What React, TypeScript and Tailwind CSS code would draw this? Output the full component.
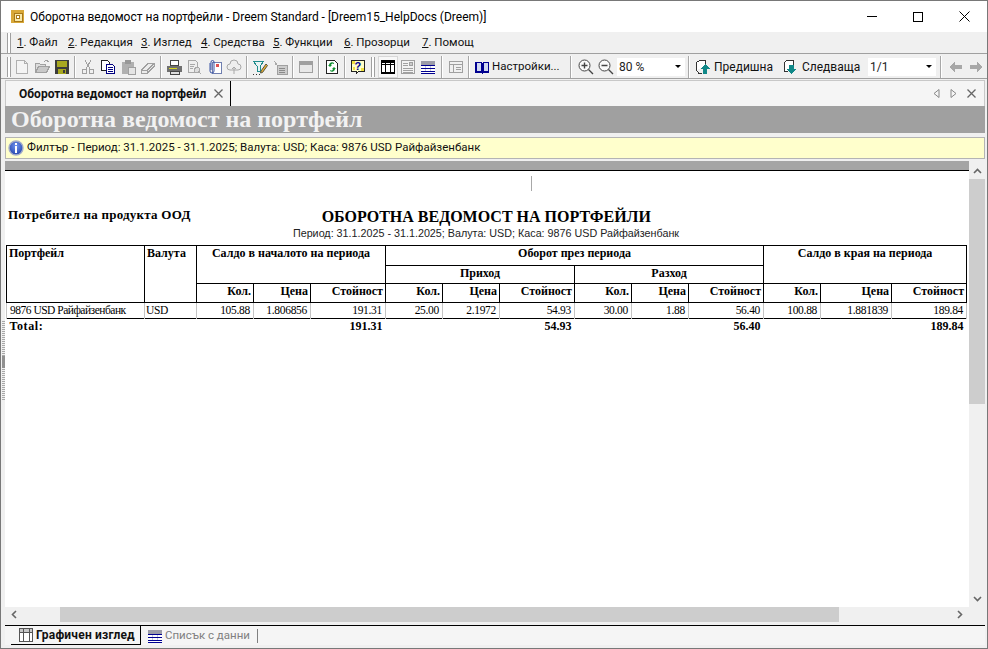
import React from 'react';

const ui = '[font-family:"Roboto","Noto_Sans",sans-serif]';
const serif = '[font-family:"Liberation_Serif",serif]';

function Ic({ children, w = 16 }: { children: React.ReactNode; w?: number }) {
    return (
        <svg width={w} height={16} viewBox={`0 0 ${w} 16`} fill="none" shapeRendering="crispEdges">
            {children}
        </svg>
    );
}

const icons: { [key: string]: React.ReactNode } = {
    doc: <path d="M2.500 1.500h8l3 3v10h-11zM10.500 1.500v3h3" stroke="#b0b0b0" fill="#f4f4f4" />,
    open: <g><path d="M1.500 13.500v-9h4l1 1h5v2" stroke="#a0a0a0" fill="#dcdcdc" /><path d="M1.500 13.500l3-6h11l-3 6z" stroke="#a0a0a0" fill="#c8c8c8" /><path d="M10 3l2-2 3 2" stroke="#a0a0a0" /></g>,
    save: <g><rect x="1" y="1" width="14" height="14" fill="#3c3c3c" /><rect x="3" y="2" width="10" height="6" fill="#a8a820" /><rect x="4" y="10" width="8" height="5" fill="#a8a820" /><rect x="9" y="11" width="2" height="3" fill="#3c3c3c" /></g>,
    cut: <g stroke="#a0a0a0"><path d="M5 1l5 9M11 1l-5 9" /><circle cx="4.500" cy="12.500" r="2.200" /><circle cx="11.500" cy="12.500" r="2.200" /></g>,
    copy: <g><path d="M1.500 1.500h6l2 2v8h-8z" stroke="#222" fill="#fff" /><path d="M6.500 5.500h6l2 2v7h-8z" stroke="#000080" fill="#fff" /><path d="M8 8.500h5M8 10.500h5M8 12.500h5" stroke="#000080" /></g>,
    paste: <g><path d="M2 3h12v12H2z" fill="#b0b0b0" /><path d="M5 1h6v4H5z" fill="#989898" /><path d="M8 8h7v7H8z" fill="#e4e4e4" stroke="#a0a0a0" /></g>,
    eraser: <path d="M1.500 11l7-7h6v3l-7 7h-6zM1.500 11h6v3M7.500 11l7-7" stroke="#a0a0a0" fill="#ececec" />,
    print: <g><path d="M4.500 1.500h8v5h-8z" stroke="#444" fill="#fff" /><path d="M1 7h15v6H1z" fill="#707070" /><path d="M3 9h8v1H3z" fill="#d8d820" /><path d="M4 12h9v3H4z" fill="#ddd" stroke="#444" /></g>,
    preview: <g stroke="#a8a8a8"><path d="M2.500 1.500h7l2 2v10h-9z" fill="#eee" /><path d="M4 5h5M4 7h4M4 9h3" /><circle cx="11" cy="11" r="2.500" fill="#ddd" /><path d="M13 13l2 2" /></g>,
    attach: <g><rect x="6" y="3" width="9" height="11" fill="#fff" stroke="#6f7fb0" /><rect x="10" y="5" width="3" height="3" fill="#e05050" /><path d="M4 4v8a2 2 0 0 0 4 0V3a1.500 1.500 0 0 0-3 0v8" stroke="#3b55a5" fill="none" shapeRendering="auto" /></g>,
    cloud: <g stroke="#a8a8a8" shapeRendering="auto"><path d="M4 11a3 3 0 0 1 0-6 4 4 0 0 1 8 0 3 3 0 0 1 0 6z" fill="#eee" /><path d="M8 8v7M6 10l2-2 2 2" /></g>,
    filter: <g><path d="M1.500 2.500h10L8 7v5H5V7z" fill="#e8f4f4" stroke="#208c8c" /><path d="M9 12l5-7 1.500 1.500-5 7-2 .5z" fill="#e8b030" stroke="#554" shapeRendering="auto" /><path d="M1 15h1M4 15h1M7 15h1" stroke="#333" /></g>,
    calc: <g><path d="M2 1l3 4-1 2z" fill="#aaa" /><rect x="5" y="6" width="10" height="9" fill="#ccc" stroke="#a0a0a0" /><path d="M7 9h6M7 11h6M7 13h6" stroke="#8a8a8a" /></g>,
    win: <g><rect x="1.500" y="2.500" width="13" height="11" stroke="#a0a0a0" fill="#e8e8e8" /><rect x="2" y="3" width="12" height="3" fill="#a0a0a0" /></g>,
    refresh: <g><path d="M2.500 1.500h8l3 3v10h-11z" stroke="#222" fill="#fff" /><path d="M10 4a3 3 0 0 0-5 2l-1 0 2 2 2-2H7a2 2 0 0 1 3-1zM6 12a3 3 0 0 0 5-2l1 0-2-2-2 2h1a2 2 0 0 1-3 1z" fill="#109030" shapeRendering="auto" /></g>,
    help: <g><path d="M1.500 1.500h13v11h-6l-2 2v-2h-5z" stroke="#222" fill="#ffffc8" /><path d="M2 2h3v3H2zM3 8h2v3H3zM11 9h3v3h-3z" fill="#f0e040" /><text x="4.600" y="11" fontSize="11" fontWeight="700" fill="#000090" fontFamily="Liberation Sans">?</text></g>,
    grid: <g><rect x="1.500" y="1.500" width="13" height="13" stroke="#000" fill="#fff" /><path d="M1 2h14v2H1zM1 13h14v2H1z" fill="#000" /><path d="M1.500 5.500h13M5.500 4v9M10.500 4v9" stroke="#000" /></g>,
    gridTab: <g><rect x="1.500" y="1.500" width="13" height="13" stroke="#555" fill="#fff" /><path d="M2 2h12v3H2z" fill="#c8c8c8" /><path d="M1.500 5.500h13M5.500 2v12M11.500 2v12" stroke="#555" /></g>,
    form: <g stroke="#a0a0a0"><rect x="1.500" y="1.500" width="13" height="13" fill="#f2f2f2" /><path d="M3 4h5M3 6h5M3 9h10M3 11h10M3 13h10" /><rect x="9.500" y="3.500" width="3" height="3" fill="#ccc" /></g>,
    list: <g><rect x="1" y="2" width="14" height="12" fill="#fff" /><path d="M1 2h14v4H1z" fill="#9c9ca8" /><path d="M1 6.500h14M1 9.500h14M1 12.500h14M1 14.500h14" stroke="#000090" /><path d="M5.500 7v2M10.500 7v2M5.500 10v2M10.500 10v2" stroke="#c8c8e0" /></g>,
    panel: <g stroke="#a0a0a0"><rect x="1.500" y="2.500" width="13" height="11" fill="#f0f0f0" /><path d="M1.500 5.500h13M5.500 5.500v8M8 8h5M8 10h5" /></g>,
    book: <g><path d="M1 3h6l1 1 1-1h6v11H9l-1 1-1-1H1z" fill="#000090" /><path d="M2.500 4h4v8h-4zM9.500 4h4v8h-4z" fill="#d0d8f0" /></g>,
    zoomIn: <g stroke="#444" shapeRendering="auto"><circle cx="6.500" cy="6.500" r="5.500" fill="#fafafa" /><path d="M3.500 6.500h6M6.500 3.500v6M10.500 10.500l4.500 4.500" strokeWidth="1.400" /></g>,
    zoomOut: <g stroke="#444" shapeRendering="auto"><circle cx="6.500" cy="6.500" r="5.500" fill="#fafafa" /><path d="M3.500 6.500h6M10.500 10.500l4.500 4.500" strokeWidth="1.400" /></g>,
    prev: <g><path d="M1.500 11V3.500l3-2h6v6" stroke="#333" fill="#fff" /><path d="M1.500 11l2 3h3" stroke="#333" /><path d="M10 5l5 5h-3v5H8v-5H5z" fill="#108888" /></g>,
    next: <g><path d="M4.500 12.500h-3v-9l2-2h7v5" stroke="#333" fill="#fff" /><path d="M6 6h5v4h3l-5.500 5L3 10h3z" fill="#108888" /></g>,
    left: <path d="M1 8l6-5v3h7v4H7v3z" fill="#a8a8a8" />,
    right: <path d="M15 8L9 3v3H2v4h7v3z" fill="#a8a8a8" />,
};

function Tool({ name, active }: { name: string; active?: boolean }) {
    return (
        <span className={`w-5 h-[22px] shrink-0 flex items-center justify-center ${active ? 'bg-[#f8f8f8] outline outline-[#d8d8d8] -outline-offset-1' : ''}`}>
            <Ic>{icons[name]}</Ic>
        </span>
    );
}

function Sep({ w = 6 }: { w?: number }) {
    return (
        <span className="shrink-0 flex justify-center" style={{ width: w }}>
            <span className="w-px h-[22px] bg-[#a8a8a8] border-r border-white box-content"></span>
        </span>
    );
}

function Grip({ h = 20 }: { h?: number }) {
    return <span className="shrink-0 w-1 border-x border-[#a0a0a0] bg-white" style={{ height: h }}></span>;
}

function Combo({ value }: { value: string }) {
    return (
        <span className="shrink-0 w-[68px] h-[18px] bg-white flex items-center justify-between pl-[2px] pr-[2px] text-[12px] text-[#222]">
            {value}
            <span className="w-0 h-0 border-x-[3px] border-x-transparent border-t-[3px] border-t-black mr-[2px]"></span>
        </span>
    );
}

const menus = [
    { n: '1', t: '. Файл', x: 'w-[51px]' },
    { n: '2', t: '. Редакция', x: 'w-[73px]' },
    { n: '3', t: '. Изглед', x: 'w-[60px]' },
    { n: '4', t: '. Средства', x: 'w-[72px]' },
    { n: '5', t: '. Функции', x: 'w-[71px]' },
    { n: '6', t: '. Прозорци', x: 'w-[78px]' },
    { n: '7', t: '. Помощ', x: 'w-[60px]' },
];

const th = 'border border-black align-top font-bold px-[2px] leading-[14px] overflow-hidden';
const sub = 'border border-black border-b-black font-bold text-right px-[2px] align-top leading-[14px]';
const td = 'border-x border-[#c4c4c4] text-right px-[3px] leading-[15px] text-[11.5px] font-normal tracking-[-0.3px]';

function ReportTable() {
    const cols = [138, 52, 57, 57, 75, 57, 57, 75, 57, 57, 75, 57, 71, 75];
    const heads = ['Кол.', 'Цена', 'Стойност'];
    const rows = ['105.88', '1.806856', '191.31', '25.00', '2.1972', '54.93', '30.00', '1.88', '56.40', '100.88', '1.881839', '189.84'];
    const totals = [2, 5, 8, 11];
    return (
        <table className={`${serif} table-fixed border-collapse w-[960px] text-[12px] text-black`}>
            <colgroup>
                {cols.map((c, i) => <col key={i} style={{ width: c }} />)}
            </colgroup>
            <thead>
                <tr className="h-5">
                    <th rowSpan={3} className={`${th} text-left`}>Портфейл</th>
                    <th rowSpan={3} className={`${th} text-left`}>Валута</th>
                    <th rowSpan={2} colSpan={3} className={`${th} text-center`}>Салдо в началото на периода</th>
                    <th colSpan={6} className={`${th} text-center`}>Оборот през периода</th>
                    <th rowSpan={2} colSpan={3} className={`${th} text-center`}>Салдо в края на периода</th>
                </tr>
                <tr className="h-[18px]">
                    <th colSpan={3} className={`${th} text-center`}>Приход</th>
                    <th colSpan={3} className={`${th} text-center`}>Разход</th>
                </tr>
                <tr className="h-[19px]">
                    {[0, 1, 2, 3].map(g => heads.map(h => (
                        <th key={`${g}${h}`} className={sub}>{h}</th>
                    )))}
                </tr>
            </thead>
            <tbody>
                <tr className="h-4 border-b border-black">
                    <td className={`${td} text-left! tracking-[-0.5px] whitespace-nowrap overflow-hidden`}>9876 USD Райфайзенбанк</td>
                    <td className={`${td} text-left! pl-[1px]!`}>USD</td>
                    {rows.map((r, i) => <td key={i} className={td}>{r}</td>)}
                </tr>
                <tr className="h-4 font-bold text-[12px]">
                    <td colSpan={2} className="px-[3px] leading-[15px] tracking-[0.6px]">Total:</td>
                    {rows.map((r, i) => (
                        <td key={i} className="text-right px-[3px] leading-[15px]">{totals.includes(i) ? r : ''}</td>
                    ))}
                </tr>
            </tbody>
        </table>
    );
}

export default function App() {
    return (
        <div className={`${ui} relative w-[988px] h-[649px] bg-[#f0f0f0] border border-[#787878] flex flex-col overflow-hidden text-[12px] text-black`}>
            {/* Title bar */}
            <div className="h-[31px] bg-white flex items-center shrink-0 pl-[10px]">
                <svg width="14" height="14" viewBox="0 0 14 14" shapeRendering="crispEdges">
                    <rect x="0" y="0" width="13" height="13" fill="#d8a838" />
                    <rect x="3" y="3" width="8" height="8" fill="#f8e8a8" stroke="#a87818" />
                    <rect x="5.500" y="5.500" width="3" height="3" fill="#fff" stroke="#a87818" />
                </svg>
                <span className="ml-[5px] text-[12px]">Оборотна ведомост на портфейли - Dreem Standard - [Dreem15_HelpDocs (Dreem)]</span>
                <div className="ml-auto flex items-center h-full">
                    <span className="w-[46px] flex justify-center"><span className="w-[10px] h-px bg-black"></span></span>
                    <span className="w-[46px] flex justify-center"><span className="w-[10px] h-[10px] border border-black"></span></span>
                    <span className="w-[46px] flex justify-center">
                        <svg width="11" height="11" viewBox="0 0 11 11" stroke="#000"><path d="M.5.5l10 10M10.500.5l-10 10" /></svg>
                    </span>
                </div>
            </div>

            {/* Menu bar */}
            <div className="h-[22px] shrink-0 border-b border-[#a0a0a0] flex items-center pl-[6px] pt-px">
                <Grip />
                <div className="flex ml-[6px] text-[11.5px] text-[#111]">
                    {menus.map(m => (
                        <span key={m.n} className={`${m.x} whitespace-nowrap`}><span className="underline">{m.n}</span>{m.t}</span>
                    ))}
                </div>
            </div>

            {/* Toolbar */}
            <div className="h-[25px] shrink-0 border-b border-[#a0a0a0] flex items-center pl-[6px] pt-px text-[12px] text-[#111]">
                <Grip />
                <span className="w-[1px]"></span>
                <Tool name="doc" /><Tool name="open" /><Tool name="save" />
                <Sep />
                <Tool name="cut" /><Tool name="copy" /><Tool name="paste" /><Tool name="eraser" />
                <Sep />
                <Tool name="print" /><Tool name="preview" /><Tool name="attach" /><Tool name="cloud" />
                <Sep />
                <Tool name="filter" /><Tool name="calc" />
                <Sep />
                <Tool name="win" />
                <Sep />
                <Tool name="refresh" />
                <Sep />
                <Tool name="help" />
                <span className="w-[3px]"></span>
                <Grip />
                <span className="w-[3px]"></span>
                <Tool name="grid" active /><Tool name="form" /><Tool name="list" />
                <Sep w={8} />
                <Tool name="panel" />
                <Sep />
                <Tool name="book" />
                <span className="w-[73px] text-[11.5px] whitespace-nowrap">Настройки...</span>
                <Sep w={11} />
                <Tool name="zoomIn" /><Tool name="zoomOut" />
                <span className="w-[1px]"></span>
                <Combo value="80 %" />
                <Sep w={8} />
                <Tool name="prev" />
                <span className="ml-px w-[67px] whitespace-nowrap">Предишна</span>
                <Tool name="next" />
                <span className="ml-px w-[66px] whitespace-nowrap">Следваща</span>
                <Combo value="1/1" />
                <Sep w={10} />
                <Tool name="left" /><Tool name="right" />
            </div>

            {/* Body */}
            <div className="flex-1 flex flex-col min-h-0 pl-1 pr-[2px]">
                {/* Document tab strip */}
                <div className="h-[26px] mt-px shrink-0 bg-[#f5f5f5] border border-[#c8c8c8] border-b-0 flex items-center">
                    <div className="ml-[5px] w-[220px] h-full border-r border-black flex items-center pl-2">
                        <span className="font-bold text-[12px] whitespace-nowrap text-[#111]">Оборотна ведомост на портфейл</span>
                        <span className="ml-2">
                            <svg width="9" height="9" viewBox="0 0 9 9" stroke="#666" strokeWidth="1.300"><path d="M.5.5l8 8M8.500.5l-8 8" /></svg>
                        </span>
                    </div>
                    <div className="ml-auto flex items-center gap-[10px] pr-[8px]">
                        <svg width="7" height="9" viewBox="0 0 7 9" fill="none" stroke="#888"><path d="M6 .5v8L1 4.500z" /></svg>
                        <svg width="7" height="9" viewBox="0 0 7 9" fill="none" stroke="#888"><path d="M1 .5v8L6 4.500z" /></svg>
                        <svg width="9" height="9" viewBox="0 0 9 9" stroke="#666" strokeWidth="1.300"><path d="M.5.5l8 8M8.500.5l-8 8" /></svg>
                    </div>
                </div>

                {/* Report heading */}
                <div className={`${serif} h-[27px] shrink-0 bg-[#a0a0a0] text-[#f2f2f2] font-bold text-[24px] leading-[27px] pl-[6px] whitespace-nowrap`}>
                    Оборотна ведомост на портфейл
                </div>

                {/* Filter info */}
                <div className="h-[22px] mt-1 shrink-0 bg-[#ffffcc] border border-[#b4b4b4] flex items-center pl-[2px] text-[11.5px] text-[#111]">
                    <svg width="16" height="16" viewBox="0 0 16 16">
                        <defs>
                            <radialGradient id="infoFill" cx="50%" cy="35%" r="70%">
                                <stop offset="0%" stopColor="#6f93ee" />
                                <stop offset="100%" stopColor="#1f3fa8" />
                            </radialGradient>
                        </defs>
                        <circle cx="8" cy="8" r="7" fill="url(#infoFill)" stroke="#a4acc8" strokeWidth="1.400" />
                        <rect x="7" y="3" width="2" height="2" fill="#fff" />
                        <rect x="7" y="6" width="2" height="7" fill="#fff" />
                    </svg>
                    <span className="ml-[3px] whitespace-nowrap">Филтър - Период: 31.1.2025 - 31.1.2025; Валута: USD; Каса: 9876 USD Райфайзенбанк</span>
                </div>

                {/* Report viewer with scrollbars */}
                <div className="flex-1 min-h-0 flex mt-[2px]">
                    <div className="flex-1 min-w-0 flex flex-col">
                        <div className="h-[9px] shrink-0 bg-[#a5a5a5]"></div>
                        <div className="h-px shrink-0 bg-black"></div>
                        <div className="flex-1 bg-white pl-px min-h-0 overflow-hidden">
                            <div className="h-[5px]"></div>
                            <div className="w-px h-[15px] bg-[#a8a8a8] ml-[525px]"></div>
                            <div className={`${serif} flex items-start mt-4 h-[19px]`}>
                                <span className="font-bold text-[13px] tracking-[0.25px] pl-[2px] leading-[15px] whitespace-nowrap">Потребител на продукта ООД</span>
                                <span className="font-bold text-[16px] leading-[18px] pt-px ml-[131px] whitespace-nowrap">ОБОРОТНА ВЕДОМОСТ НА ПОРТФЕЙЛИ</span>
                            </div>
                            <div className="[font-family:'Liberation_Sans',sans-serif] text-[10.75px] text-center w-[960px] h-[14px] leading-[14px] text-[#222]">
                                Период: 31.1.2025 - 31.1.2025; Валута: USD; Каса: 9876 USD Райфайзенбанк
                            </div>
                            <div className="mt-[5px]"><ReportTable /></div>
                        </div>
                    </div>
                    {/* Vertical scrollbar */}
                    <div className="w-4 shrink-0 flex flex-col">
                        <div className="h-[2px]"></div>
                        <div className="h-4 flex items-center justify-center">
                            <svg width="9" height="6" viewBox="0 0 9 6" fill="none" stroke="#666" strokeWidth="1.600"><path d="M1 5l3.500-3.500L8 5" /></svg>
                        </div>
                        <div className="h-[225px] bg-[#cdcdcd]"></div>
                        <div className="flex-1"></div>
                        <div className="h-4 flex items-center justify-center">
                            <svg width="9" height="6" viewBox="0 0 9 6" fill="none" stroke="#666" strokeWidth="1.600"><path d="M1 1l3.500 3.500L8 1" /></svg>
                        </div>
                    </div>
                </div>

                {/* Horizontal scrollbar */}
                <div className="h-[15px] shrink-0 flex items-center">
                    <span className="w-[55px] flex pl-[6px]">
                        <svg width="6" height="9" viewBox="0 0 6 9" fill="none" stroke="#666" strokeWidth="1.600"><path d="M5 1L1.500 4.500 5 8" /></svg>
                    </span>
                    <span className="w-[779px] h-full bg-[#cdcdcd]"></span>
                    <span className="flex-1 flex justify-end pr-[22px]">
                        <svg width="6" height="9" viewBox="0 0 6 9" fill="none" stroke="#666" strokeWidth="1.600"><path d="M1 1l3.500 3.500L1 8" /></svg>
                    </span>
                </div>

                {/* View tabs */}
                <div className="h-[20px] mt-[3px] mb-[3px] shrink-0 bg-[#f5f5f5] border-t border-black flex items-stretch">
                    <div className="ml-[6px] w-[130px] border-r border-b border-black flex items-center pl-[7px] gap-[2px]">
                        <Ic>{icons.gridTab}</Ic>
                        <span className="font-bold text-[12px] tracking-[0.2px] whitespace-nowrap text-[#111]">Графичен изглед</span>
                    </div>
                    <div className="flex items-center pl-[6px] gap-[2px]">
                        <Ic>{icons.list}</Ic>
                        <span className="text-[11.5px] text-[#808080] whitespace-nowrap">Списък с данни</span>
                        <span className="ml-[5px] w-px h-[14px] bg-[#808080]"></span>
                    </div>
                </div>
            </div>

            {/* Splitter grip on the left edge */}
            <div className="absolute left-px top-[320px] w-[3px] h-[80px] bg-[repeating-linear-gradient(to_bottom,#a8a8a8_0px,#a8a8a8_1px,transparent_1px,transparent_2px)]"></div>
            <div className="absolute left-px top-[355px] w-[3px] h-[12px] bg-[#909090]"></div>
        </div>
    );
}
